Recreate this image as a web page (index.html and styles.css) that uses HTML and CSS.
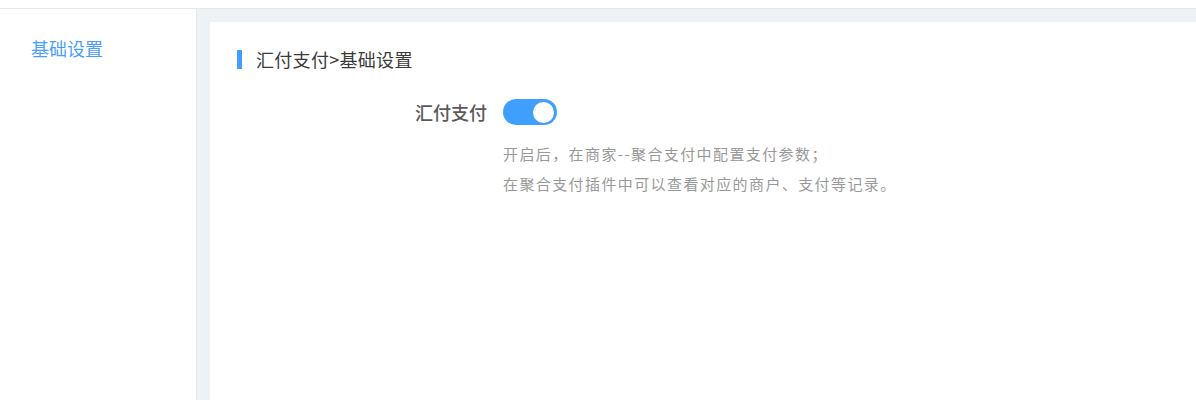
FILE: index.html
```html
<!DOCTYPE html>
<html lang="zh-CN">
<head>
  <meta charset="UTF-8">
  <meta name="viewport" content="width=device-width, initial-scale=1.0">
  <link rel="stylesheet" href="styles.css">
  <title>汇付支付</title>
</head>
<body>
  <div class="topbar"></div>
  <div class="layout">
    <div class="sidebar">
      <div class="menu-item active">基础设置</div>
    </div>
    <div class="main">
      <div class="card">
        <div class="card-title">
          <span class="title-bar"></span>
          <span>汇付支付&gt;基础设置</span>
        </div>
        <div class="form-row">
          <div class="form-label">汇付支付</div>
          <div class="form-control">
            <span class="switch on"><span class="switch-knob"></span></span>
          </div>
        </div>
        <div class="form-tip">
          <p>开启后，在商家--聚合支付中配置支付参数；</p>
          <p>在聚合支付插件中可以查看对应的商户、支付等记录。</p>
        </div>
      </div>
    </div>
  </div>
</body>
</html>
```

FILE: styles.css
```css
body {
  margin: 0;
  font-family: "Noto Sans CJK SC", "Noto Sans", sans-serif;
  background-color: #fff;
  overflow: hidden;
}

.topbar {
  height: 8px;
  border-bottom: 1px solid #e8e8e8;
}

.layout {
  display: flex;
  min-height: calc(100vh - 9px);
}

.sidebar {
  width: 196px;
  border-right: 1px solid #e4e6ea;
  flex-shrink: 0;
}

.menu-item {
  padding: 27px 0 0 31px;
  font-size: 18px;
  line-height: 24px;
  color: #333;
}

.menu-item.active {
  color: #4a9ff9;
}

.main {
  flex: 1;
  background-color: #eff2f5;
  padding: 13px 0 0 13px;
  display: flex;
}

.card {
  flex: 1;
  background-color: #fff;
  padding: 28px 27px 0;
}

.card-title {
  display: flex;
  align-items: center;
  font-size: 18px;
  line-height: 19px;
  color: #3a3a3a;
  letter-spacing: 0.3px;
}

.title-bar {
  width: 5px;
  height: 19px;
  background-color: #409eff;
  margin-right: 14px;
}

.form-row {
  display: flex;
  align-items: center;
  margin-top: 30px;
}

.form-label {
  width: 266px;
  padding-right: 16px;
  box-sizing: border-box;
  text-align: right;
  font-size: 18px;
  font-weight: 500;
  line-height: 26px;
  color: #5a5a5a;
}

.switch {
  display: block;
  position: relative;
  width: 54px;
  height: 26px;
  border-radius: 13px;
  background-color: #dcdfe6;
}

.switch.on {
  background-color: #409eff;
}

.switch-knob {
  position: absolute;
  top: 2.5px;
  left: 3px;
  width: 21px;
  height: 21px;
  border-radius: 50%;
  background-color: #fff;
}

.switch.on .switch-knob {
  left: auto;
  right: 3px;
}

.form-tip {
  margin: 14px 0 0 266px;
}

.form-tip p {
  margin: 0;
  font-size: 15px;
  letter-spacing: 1.4px;
  line-height: 30px;
  color: #999;
}
```
